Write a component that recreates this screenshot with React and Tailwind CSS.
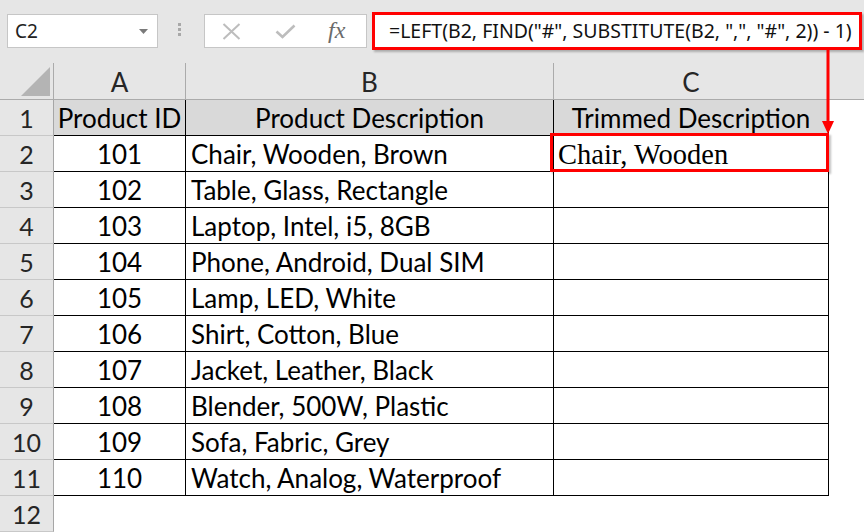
import React from 'react';

const rows = [
    ['101', 'Chair, Wooden, Brown'],
    ['102', 'Table, Glass, Rectangle'],
    ['103', 'Laptop, Intel, i5, 8GB'],
    ['104', 'Phone, Android, Dual SIM'],
    ['105', 'Lamp, LED, White'],
    ['106', 'Shirt, Cotton, Blue'],
    ['107', 'Jacket, Leather, Black'],
    ['108', 'Blender, 500W, Plastic'],
    ['109', 'Sofa, Fabric, Grey'],
    ['110', 'Watch, Analog, Waterproof'],
];

const RowHead = ({ children }) => (
    <div className="w-[54px] h-[36px] shrink-0 flex items-center justify-center pt-[2px] border-r border-b border-r-[#a6a6a6] border-b-[#c8c8c8] bg-[#e6e6e6] text-[25px] text-[#262626]">
        {children}
    </div>
);

const FormulaBar = () => (
    <div className="flex items-start h-[63px]">
        {/* Name box */}
        <div className="ml-[7px] mt-[14px] w-[151px] h-[34px] flex items-center justify-between bg-white border border-[#c6c6c6] pl-[7px] pr-[9px]">
            <span className="text-[19px] text-[#222] font-['Noto_Sans',sans-serif]">C2</span>
            <svg width="9" height="5" viewBox="0 0 9 5"><polygon points="0,0 9,0 4.5,5" fill="#7a7a7a" /></svg>
        </div>

        {/* grip dots */}
        <div className="ml-[20px] mt-[23px] flex flex-col gap-[2px]">
            <span className="w-[3px] h-[3px] bg-[#a8a8a8]" />
            <span className="w-[3px] h-[3px] bg-[#a8a8a8]" />
            <span className="w-[3px] h-[3px] bg-[#a8a8a8]" />
        </div>

        {/* cancel / enter / fx */}
        <div className="ml-[23px] mt-[14px] w-[163px] h-[34px] flex items-center bg-white border border-[#c6c6c6]">
            <svg className="ml-[17px]" width="19" height="17" viewBox="0 0 19 17">
                <path d="M1.5 1 L17.5 16 M17.5 1 L1.5 16" stroke="#bdbdbd" strokeWidth="2" />
            </svg>
            <svg className="ml-[34px]" width="21" height="15" viewBox="0 0 21 15">
                <path d="M1.5 7.5 L7.5 13 L19.5 1.5" stroke="#bdbdbd" strokeWidth="2.6" fill="none" />
            </svg>
            <span className="ml-[32px] text-[24px] italic text-[#6b6b6b] font-['Liberation_Serif',serif] leading-none -mt-[2px]">fx</span>
        </div>

        {/* formula input */}
        <div className="ml-[5px] mt-[12px] w-[490px] h-[38px] flex items-center bg-white border-[3px] border-[#ff0000] pl-[14px] shadow-[2px_2px_2px_rgba(0,0,0,0.25)]">
            <span className="text-[19.5px] text-[#111] font-['Noto_Sans',sans-serif] whitespace-nowrap">
                =LEFT(B2, FIND("#", SUBSTITUTE(B2, ",", "#", 2)) - 1)
            </span>
        </div>
    </div>
);

export default function App() {
    return (
        <div className="relative w-[864px] h-[532px] overflow-hidden bg-[#e6e6e6] font-['Lato',sans-serif]">
            <FormulaBar />

            {/* Column headers */}
            <div className="flex h-[37px] border-b border-[#ababab]">
                <div className="w-[54px] shrink-0 border-r border-[#ababab] flex items-end justify-end pr-[3px] pb-[3px]">
                    <svg width="29" height="29" viewBox="0 0 29 29"><polygon points="0,29 29,29 29,0" fill="#b4b4b4" /></svg>
                </div>
                <div className="w-[132px] shrink-0 border-r border-[#ababab] flex items-center justify-center pt-[3px] text-[26px] text-[#262626]">A</div>
                <div className="w-[368px] shrink-0 border-r border-[#ababab] flex items-center justify-center pt-[3px] text-[26px] text-[#262626]">B</div>
                <div className="w-[275px] shrink-0 border-r border-[#ababab] flex items-center justify-center pt-[3px] text-[26px] text-[#262626]">C</div>
                <div className="flex-1" />
            </div>

            {/* Header row */}
            <div className="flex">
                <RowHead>1</RowHead>
                <div className="w-[132px] h-[36px] shrink-0 bg-[#d9d9d9] border-r border-b border-black flex items-center justify-center pt-[2px] text-[26px] text-black">Product ID</div>
                <div className="w-[368px] h-[36px] shrink-0 bg-[#d9d9d9] border-r border-b border-black flex items-center justify-center pt-[2px] text-[26px] text-black">Product Description</div>
                <div className="w-[275px] h-[36px] shrink-0 bg-[#d9d9d9] border-r border-b border-black flex items-center justify-center pt-[2px] text-[26px] text-black">Trimmed Description</div>
                <div className="flex-1 h-[36px] bg-white" />
            </div>

            {rows.map(([id, desc], i) => (
                <div key={id} className="flex">
                    <RowHead>{i + 2}</RowHead>
                    <div className="w-[132px] h-[36px] shrink-0 bg-white border-r border-b border-black flex items-center justify-center pt-[2px] text-[26px] text-black">{id}</div>
                    <div className="w-[368px] h-[36px] shrink-0 bg-white border-r border-b border-black flex items-center pl-[5px] pt-[2px] text-[26px] text-black whitespace-nowrap">{desc}</div>
                    <div className="relative w-[275px] h-[36px] shrink-0 bg-white border-r border-b border-black flex items-center pl-[4px] pt-[3px]">
                        {i === 0 && (
                            <>
                                <span className="text-[28.5px] text-black font-['Liberation_Serif',serif] whitespace-nowrap">Chair, Wooden</span>
                                <div className="absolute -left-[4px] -top-[3px] -right-[1px] -bottom-[1px] border-[3px] border-[#ff0000] shadow-[2px_2px_2px_rgba(0,0,0,0.25)]" />
                            </>
                        )}
                    </div>
                    <div className="flex-1 h-[36px] bg-white" />
                </div>
            ))}

            <div className="flex">
                <RowHead>12</RowHead>
                <div className="flex-1 h-[36px] bg-white" />
            </div>

            {/* arrow from formula bar to C2 */}
            <svg className="absolute left-0 top-0 pointer-events-none" width="864" height="532">
                <line x1="828" y1="50" x2="828" y2="123" stroke="#ff0000" strokeWidth="3" />
                <polygon points="822,121 834,121 828,134" fill="#ff0000" />
            </svg>
        </div>
    );
}
